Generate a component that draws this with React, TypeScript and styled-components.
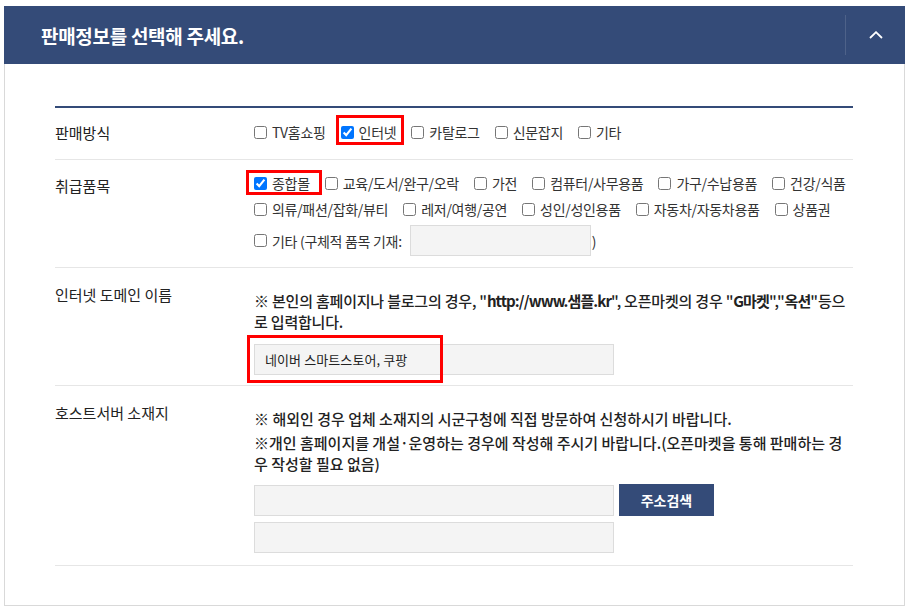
import React from 'react';
import styled, { createGlobalStyle } from 'styled-components';

const NAVY = '#344b78';

// ---------
// GLOBAL
// ---------

let GlobalStyle = createGlobalStyle`
  body {
    margin: 0;
    background: #fff;
    font-family: 'Noto Sans CJK KR', 'Noto Sans', sans-serif;
    color: #333;
  }
`;

let Page = styled.div`
  padding: 6px 4px 4px;
`;

let Panel = styled.section`
  display: flex;
  flex-direction: column;
`;

// ---------
// HEADER
// ---------

let PanelHeader = styled.header`
  display: flex;
  align-items: center;
  height: 58px;
  background: ${NAVY};
`;

let Title = styled.h2`
  flex: 1;
  margin: 0;
  padding-left: 37px;
  font-size: 19px;
  font-weight: 700;
  letter-spacing: -0.3px;
  color: #fff;
`;

let Toggle = styled.button`
  display: flex;
  align-items: center;
  justify-content: center;
  width: 60px;
  height: 40px;
  padding: 0;
  border: 0;
  border-left: 1px solid rgba(255, 255, 255, 0.13);
  background: transparent;
  cursor: pointer;
`;

// ---------
// FORM
// ---------

let PanelBody = styled.div`
  border: 1px solid #d9d9d9;
  border-top: 0;
  padding: 42px 51px 39px 50px;
`;

let FormTable = styled.div`
  border-top: 2px solid ${NAVY};
`;

let Row = styled.div<{ $pad: string }>`
  display: grid;
  grid-template-columns: 199px 1fr;
  align-items: start;
  padding: ${({ $pad }) => $pad};
  border-bottom: 1px solid #e6e6e6;
`;

let Label = styled.div<{ $shift?: number }>`
  padding-top: ${({ $shift }) => $shift || 0}px;
  font-size: 15px;
  line-height: 20px;
  color: #222;
`;

let Field = styled.div`
  display: flex;
  flex-direction: column;
  min-width: 0;
`;

let OptionLines = styled.div`
  display: flex;
  flex-direction: column;
  gap: 6px;
`;

let OptionLine = styled.div`
  display: flex;
  align-items: center;
  min-height: 20px;
  white-space: nowrap;
`;

let Option = styled.label`
  position: relative;
  display: inline-flex;
  align-items: center;
  gap: 5px;
  margin-right: 15px;
  font-size: 14px;
  line-height: 20px;
  letter-spacing: -0.3px;
  color: #333;
`;

let Check = styled.input.attrs({ type: 'checkbox' })`
  width: 13px;
  height: 13px;
  margin: 0;
`;

let Mark = styled.span<{ $top: number; $left: number; $width: number; $height: number }>`
  position: absolute;
  top: ${({ $top }) => $top}px;
  left: ${({ $left }) => $left}px;
  width: ${({ $width }) => $width}px;
  height: ${({ $height }) => $height}px;
  box-sizing: border-box;
  border: 3px solid #ff0000;
  pointer-events: none;
`;

let TextInput = styled.input<{ $width: number }>`
  box-sizing: border-box;
  width: ${({ $width }) => $width}px;
  height: 31px;
  padding: 0 10px;
  border: 1px solid #dcdcdc;
  background: #f4f4f4;
  font: inherit;
  font-size: 13px;
  letter-spacing: 0.1px;
  color: #222;
  outline: none;
`;

let InlineInput = styled(TextInput)`
  margin: 0 -4px 0 3px;
`;

let Notice = styled.p<{ $gap: number; $tight?: boolean }>`
  margin: ${({ $gap }) => $gap}px 0 0;
  font-size: 15px;
  line-height: 21px;
  letter-spacing: ${({ $tight }) => ($tight ? '-0.2px' : '0')};
  font-weight: 500;
  white-space: nowrap;
  color: #222;
`;

let Strong = styled.b`
  font-weight: 700;
  letter-spacing: -0.9px;
`;

let InputWrap = styled.div`
  position: relative;
  align-self: flex-start;
  margin-top: 12px;
`;

let AddressBlock = styled.div`
  display: flex;
  flex-direction: column;
  gap: 6px;
  margin-top: 10px;
`;

let AddressLine = styled.div`
  display: flex;
  align-items: center;
  gap: 5px;
`;

let SearchButton = styled.button`
  width: 95px;
  height: 32px;
  padding: 0;
  border: 0;
  background: ${NAVY};
  font: inherit;
  font-size: 14px;
  font-weight: 700;
  color: #fff;
  cursor: pointer;
`;

interface OptionProps {
  text: string;
  checked?: boolean;
  children?: React.ReactNode;
}

function CheckOption({ text, checked, children }: OptionProps) {
  return (
    <Option>
      <Check defaultChecked={checked} />
      {text}
      {children}
    </Option>
  );
}

export default function App() {
  return (
    <Page>
      <GlobalStyle />
      <Panel>
        <PanelHeader>
          <Title>판매정보를 선택해 주세요.</Title>
          <Toggle aria-label="접기">
            <svg width="14" height="8" viewBox="0 0 14 8">
              <polyline points="1,7 7,1.2 13,7" fill="none" stroke="#fff" strokeWidth="1.8" />
            </svg>
          </Toggle>
        </PanelHeader>

        <PanelBody>
          <FormTable>
            <Row $pad="14px 0 16px">
              <Label $shift={1}>판매방식</Label>
              <OptionLine>
                <CheckOption text="TV홈쇼핑" />
                <CheckOption text="인터넷" checked>
                  <Mark $top={-7} $left={-5} $width={68} $height={30} />
                </CheckOption>
                <CheckOption text="카탈로그" />
                <CheckOption text="신문잡지" />
                <CheckOption text="기타" />
              </OptionLine>
            </Row>

            <Row $pad="13px 0 11px">
              <Label $shift={3}>취급품목</Label>
              <OptionLines>
                <OptionLine>
                  <CheckOption text="종합몰" checked>
                    <Mark $top={-3} $left={-8} $width={76} $height={25} />
                  </CheckOption>
                  <CheckOption text="교육/도서/완구/오락" />
                  <CheckOption text="가전" />
                  <CheckOption text="컴퓨터/사무용품" />
                  <CheckOption text="가구/수납용품" />
                  <CheckOption text="건강/식품" />
                </OptionLine>
                <OptionLine>
                  <CheckOption text="의류/패션/잡화/뷰티" />
                  <CheckOption text="레저/여행/공연" />
                  <CheckOption text="성인/성인용품" />
                  <CheckOption text="자동차/자동차용품" />
                  <CheckOption text="상품권" />
                </OptionLine>
                <OptionLine>
                  <Option>
                    <Check />
                    기타 (구체적 품목 기재:
                    <InlineInput $width={181} />)
                  </Option>
                </OptionLine>
              </OptionLines>
            </Row>

            <Row $pad="17px 0 10px">
              <Label>인터넷 도메인 이름</Label>
              <Field>
                <Notice $gap={5} $tight>
                  ※ 본인의 홈페이지나 블로그의 경우, "<Strong>http://www.샘플.kr</Strong>", 오픈마켓의 경우 "
                  <Strong>G마켓</Strong>","<Strong>옥션</Strong>"등으
                  <br />로 입력합니다.
                </Notice>
                <InputWrap>
                  <TextInput $width={360} defaultValue="네이버 스마트스토어, 쿠팡" />
                  <Mark $top={-9} $left={-7} $width={196} $height={48} />
                </InputWrap>
              </Field>
            </Row>

            <Row $pad="17px 0 12px">
              <Label>호스트서버 소재지</Label>
              <Field>
                <Notice $gap={5}>※ 해외인 경우 업체 소재지의 시군구청에 직접 방문하여 신청하시기 바랍니다.</Notice>
                <Notice $gap={3}>
                  ※개인 홈페이지를 개설·운영하는 경우에 작성해 주시기 바랍니다.(오픈마켓을 통해 판매하는 경
                  <br />우 작성할 필요 없음)
                </Notice>
                <AddressBlock>
                  <AddressLine>
                    <TextInput $width={360} />
                    <SearchButton>주소검색</SearchButton>
                  </AddressLine>
                  <AddressLine>
                    <TextInput $width={360} />
                  </AddressLine>
                </AddressBlock>
              </Field>
            </Row>
          </FormTable>
        </PanelBody>
      </Panel>
    </Page>
  );
}
